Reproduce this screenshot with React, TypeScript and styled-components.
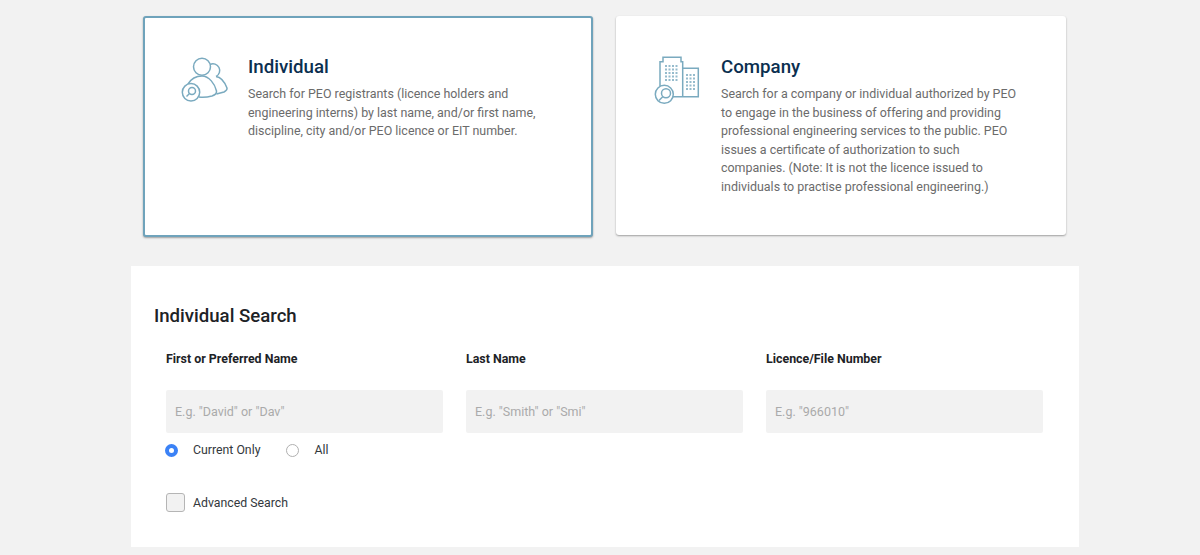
import React from "react";
import styled, { createGlobalStyle } from "styled-components";

const GlobalStyle = createGlobalStyle`
  html, body {
    margin: 0;
    padding: 0;
    background: #f2f2f2;
    font-family: Roboto, "Liberation Sans", sans-serif;
    overflow: hidden;
  }
`;

const Page = styled.div`
  width: 948px;
  height: 555px;
  margin-left: 131px;
  padding-top: 16px;
  box-sizing: border-box;
`;

const CardRow = styled.div`
  display: flex;
  align-items: flex-start;
  gap: 23px;
  padding-left: 12px;
`;

const Card = styled.div<{ $active?: boolean }>`
  box-sizing: border-box;
  width: 450px;
  height: ${(p) => (p.$active ? "221px" : "219px")};
  display: flex;
  background: #fff;
  border-radius: 3px;
  border: ${(p) => (p.$active ? "2px solid #6fa3bb" : "0")};
  padding: ${(p) => (p.$active ? "38px 30px 0 36px" : "40px 32px 0 38px")};
  box-shadow: 0 1px 2px rgba(0, 0, 0, 0.35);
`;

const IconBox = styled.div`
  flex: none;
  width: 46px;
  height: 50px;
  margin-right: 21px;
`;

const CardText = styled.div`
  flex: 1;
`;

const CardTitle = styled.h2`
  margin: 0;
  font-size: 18.7px;
  line-height: 23px;
  font-weight: 500;
  color: #0b2f50;
`;

const CardBody = styled.p`
  margin: 6px 0 0;
  max-width: 296px;
  font-size: 12.45px;
  line-height: 18.6px;
  color: #6b6b6b;
`;

const Panel = styled.section`
  margin-top: 29px;
  height: 281px;
  background: #fff;
  padding: 38px 35px 0 23px;
  box-sizing: border-box;
`;

const PanelTitle = styled.h3`
  margin: 0;
  font-size: 18.6px;
  line-height: 24px;
  font-weight: 500;
  color: #1d2226;
`;

const FieldGrid = styled.div`
  display: grid;
  grid-template-columns: repeat(3, 277px);
  column-gap: 23px;
  margin: 23px 0 0 12px;
`;

const Field = styled.div`
  display: flex;
  flex-direction: column;
`;

const FieldLabel = styled.label`
  height: 16px;
  font-size: 12.4px;
  line-height: 16px;
  font-weight: 700;
  color: #1d2226;
`;

const TextInput = styled.input`
  box-sizing: border-box;
  margin-top: 23px;
  height: 43px;
  width: 100%;
  border: 0;
  border-radius: 2px;
  padding: 0 9px;
  background: #f2f2f2;
  font-family: inherit;
  font-size: 12.5px;
  color: #1d2226;
  &::placeholder {
    color: #aaaaaa;
    opacity: 1;
  }
`;

const RadioRow = styled.div`
  display: flex;
  align-items: center;
  height: 16px;
  margin: 9px 0 0 11px;
`;

const RadioDot = styled.span<{ $checked?: boolean }>`
  box-sizing: border-box;
  flex: none;
  width: 13px;
  height: 13px;
  border-radius: 50%;
  border: ${(p) => (p.$checked ? "4px solid #3b82f6" : "1px solid #b0b0b0")};
  background: #fff;
`;

const OptionText = styled.span<{ $gap: number }>`
  margin-left: 15px;
  margin-right: ${(p) => p.$gap}px;
  font-size: 12.3px;
  line-height: 16px;
  color: #33383c;
`;

const CheckRow = styled.div`
  display: flex;
  align-items: center;
  margin: 35px 0 0 12px;
`;

const CheckBox = styled.span`
  box-sizing: border-box;
  flex: none;
  width: 19px;
  height: 19px;
  border-radius: 3px;
  border: 1px solid #b5b5b5;
  background: #f2f2f2;
`;

const CheckText = styled.span`
  margin-left: 8px;
  font-size: 12.3px;
  line-height: 16px;
  color: #33383c;
`;

const PeopleIcon = () => (
  <svg width="46" height="50" viewBox="-1 0 46 50" overflow="visible" fill="none" stroke="#7aaabf" strokeWidth="1.5">
    <path d="M28 8.500a6.500 6.500 0 1 1 6 12" />
    <path d="M34 20.500C39 21 43 27 45 32C45.500 34 44 35 42 36L34.500 38" />
    <path d="M6 28C9 23 14 20 20 20C27 20 33 28 34.500 35C35 38 33 39 30 40C26 41 21 41.500 17 41" />
    <circle cx="20" cy="10.700" r="8.500" fill="#fff" />
    <circle cx="9" cy="36.300" r="8.700" fill="#fff" />
    <circle cx="10" cy="35" r="3.500" />
    <path d="M7.500 37.500L4.500 40.500" />
  </svg>
);

const BuildingIcon = () => (
  <svg width="46" height="50" viewBox="0 0 46 50" fill="none" stroke="#7aaabf" strokeWidth="1.5">
    <path d="M6 30V5.700h3V1.300h18v4.400h1.700v35" />
    <path d="M28.700 12.300h15.600v28.400H18" />
    <path
      d="M11 10h13.500M11 13.500h13.500M11 17h13.500M11 20.500h13.500M11 24h13.500"
      strokeWidth="2"
      strokeOpacity="0.8"
      strokeDasharray="2 1.500"
    />
    <path
      d="M32 19h9.500M32 22.500h9.500M32 26h9.500M32 29.500h9.500M32 33h9.500"
      strokeWidth="2"
      strokeOpacity="0.8"
      strokeDasharray="2 1.500"
    />
    <circle cx="10.300" cy="38.300" r="9" fill="#fff" />
    <circle cx="12" cy="37.300" r="4.500" />
    <path d="M8.700 40.700L5 44.500" />
  </svg>
);

const fields = [
  { label: "First or Preferred Name", placeholder: 'E.g. "David" or "Dav"' },
  { label: "Last Name", placeholder: 'E.g. "Smith" or "Smi"' },
  { label: "Licence/File Number", placeholder: 'E.g. "966010"' },
];

export default function App() {
  return (
    <Page>
      <GlobalStyle />
      <CardRow>
        <Card $active>
          <IconBox>
            <PeopleIcon />
          </IconBox>
          <CardText>
            <CardTitle>Individual</CardTitle>
            <CardBody>
              Search for PEO registrants (licence holders and engineering interns) by last name,
              and/or first name, discipline, city and/or PEO licence or EIT number.
            </CardBody>
          </CardText>
        </Card>
        <Card>
          <IconBox>
            <BuildingIcon />
          </IconBox>
          <CardText>
            <CardTitle>Company</CardTitle>
            <CardBody>
              Search for a company or individual authorized by PEO to engage in the business of
              offering and providing professional engineering services to the public. PEO issues a
              certificate of authorization to such companies. (Note: It is not the licence issued
              to individuals to practise professional engineering.)
            </CardBody>
          </CardText>
        </Card>
      </CardRow>
      <Panel>
        <PanelTitle>Individual Search</PanelTitle>
        <FieldGrid>
          {fields.map((f) => (
            <Field key={f.label}>
              <FieldLabel>{f.label}</FieldLabel>
              <TextInput placeholder={f.placeholder} />
            </Field>
          ))}
        </FieldGrid>
        <RadioRow>
          <RadioDot $checked />
          <OptionText $gap={26}>Current Only</OptionText>
          <RadioDot />
          <OptionText $gap={0}>All</OptionText>
        </RadioRow>
        <CheckRow>
          <CheckBox />
          <CheckText>Advanced Search</CheckText>
        </CheckRow>
      </Panel>
    </Page>
  );
}
